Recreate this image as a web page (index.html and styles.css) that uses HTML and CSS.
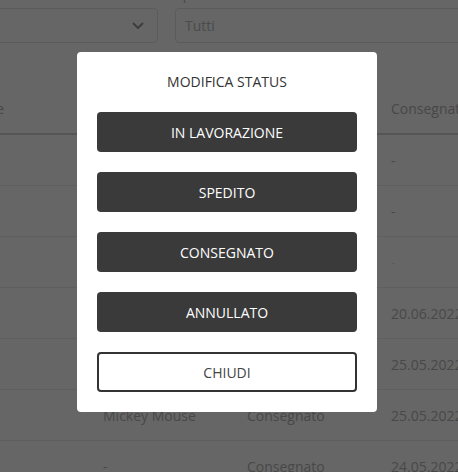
FILE: index.html
```html
<!DOCTYPE html>
<html lang="it">
<head>
<meta charset="utf-8">
<title>Ordini</title>
<link rel="stylesheet" href="styles.css">
</head>
<body>
<div class="page">
  <div class="filters">
    <div class="filter filter-first">
      <label class="filter-label">Cliente</label>
      <div class="select">
        <span class="select-value"></span>
        <svg class="chev" width="12" height="8" viewBox="0 0 12 8"><path d="M1.5 1.5 L6 6 L10.5 1.5" fill="none" stroke="currentColor" stroke-width="2" stroke-linecap="round" stroke-linejoin="round"/></svg>
      </div>
    </div>
    <div class="filter filter-second">
      <label class="filter-label">Spedizione</label>
      <div class="select">
        <span class="select-value">Tutti</span>
      </div>
    </div>
  </div>
  <table class="orders">
    <thead>
      <tr><th>Ordine</th><th>Cliente</th><th>Stato</th><th>Consegnato il</th></tr>
    </thead>
    <tbody>
      <tr><td>#1027</td><td>Donald Duck</td><td>In lavorazione</td><td>-</td></tr>
      <tr><td>#1026</td><td>Goofy</td><td>Spedito</td><td>-</td></tr>
      <tr><td>#1025</td><td>-</td><td>Annullato</td><td class="faint">-</td></tr>
      <tr><td>#1024</td><td>Minnie Mouse</td><td>Consegnato</td><td>20.06.2022</td></tr>
      <tr><td>#1023</td><td>Daisy Duck</td><td>Consegnato</td><td>25.05.2022</td></tr>
      <tr><td>#1022</td><td>Mickey Mouse</td><td>Consegnato</td><td>25.05.2022</td></tr>
      <tr><td>#1021</td><td>-</td><td>Consegnato</td><td>24.05.2022</td></tr>
    </tbody>
  </table>
</div>
<div class="overlay">
  <div class="modal">
    <h2 class="modal-title">MODIFICA STATUS</h2>
    <button class="btn btn-dark">IN LAVORAZIONE</button>
    <button class="btn btn-dark">SPEDITO</button>
    <button class="btn btn-dark">CONSEGNATO</button>
    <button class="btn btn-dark">ANNULLATO</button>
    <button class="btn btn-outline">CHIUDI</button>
  </div>
</div>
</body>
</html>
```
FILE: styles.css
```css
html, body {
  margin: 0;
  padding: 0;
  background: #ffffff;
  overflow: hidden;
  height: 100%;
}
body {
  font-family: "Open Sans", "Noto Sans", sans-serif;
  font-size: 14px;
  color: #b5b5b5;
}
.page {
  width: 620px;
  margin-left: -41px;
  margin-top: -16px;
}
.filters {
  display: flex;
  gap: 17px;
}
.filter-first { width: 199px; }
.filter-second { flex: 1; }
.filter-label {
  display: block;
  height: 20px;
  line-height: 20px;
  font-size: 14px;
  margin-bottom: 4px;
  color: #b5b5b5;
}
.select {
  box-sizing: border-box;
  height: 35px;
  border: 1px solid #e4e4e4;
  border-radius: 4px;
  display: flex;
  align-items: center;
  justify-content: space-between;
  padding: 0 13px 0 9px;
}
.select-value { color: #bcbcbc; }
.chev { color: #9a9a9a; }
.orders {
  margin-top: 40px;
  border-collapse: collapse;
  width: 576px;
  table-layout: fixed;
}
.orders th, .orders td {
  width: 144px;
  text-align: left;
  padding: 0;
  white-space: nowrap;
  overflow: hidden;
  font-weight: 400;
}
.orders th {
  height: 50px;
  border-bottom: 2px solid #d4d4d4;
  color: #b3b3b3;
}
.orders td {
  height: 50px;
  border-bottom: 1px solid #ececec;
  color: #b5b5b5;
}
.orders td.faint { color: #e4e4e4; }
.overlay {
  position: fixed;
  inset: 0;
  background: rgba(0, 0, 0, 0.6);
  display: flex;
  justify-content: center;
  align-items: flex-start;
  padding-right: 4px;
}
.modal {
  margin-top: 52px;
  width: 300px;
  box-sizing: border-box;
  padding: 20px;
  background: #ffffff;
  border-radius: 4px;
  display: flex;
  flex-direction: column;
  gap: 20px;
}
.modal-title {
  margin: 0;
  font-size: 14px;
  line-height: 20px;
  font-weight: 500;
  color: #333333;
  text-align: center;
}
.btn {
  display: block;
  width: 100%;
  height: 40px;
  box-sizing: border-box;
  border-radius: 4px;
  font-family: "Open Sans", "Noto Sans", sans-serif;
  font-size: 14px;
  cursor: pointer;
  padding: 0;
}
.btn-dark {
  background: #3a3a3a;
  border: none;
  color: #ffffff;
  font-weight: 500;
}
.btn-outline {
  background: #ffffff;
  border: 2px solid #333333;
  color: #444444;
  font-weight: 400;
}
```
